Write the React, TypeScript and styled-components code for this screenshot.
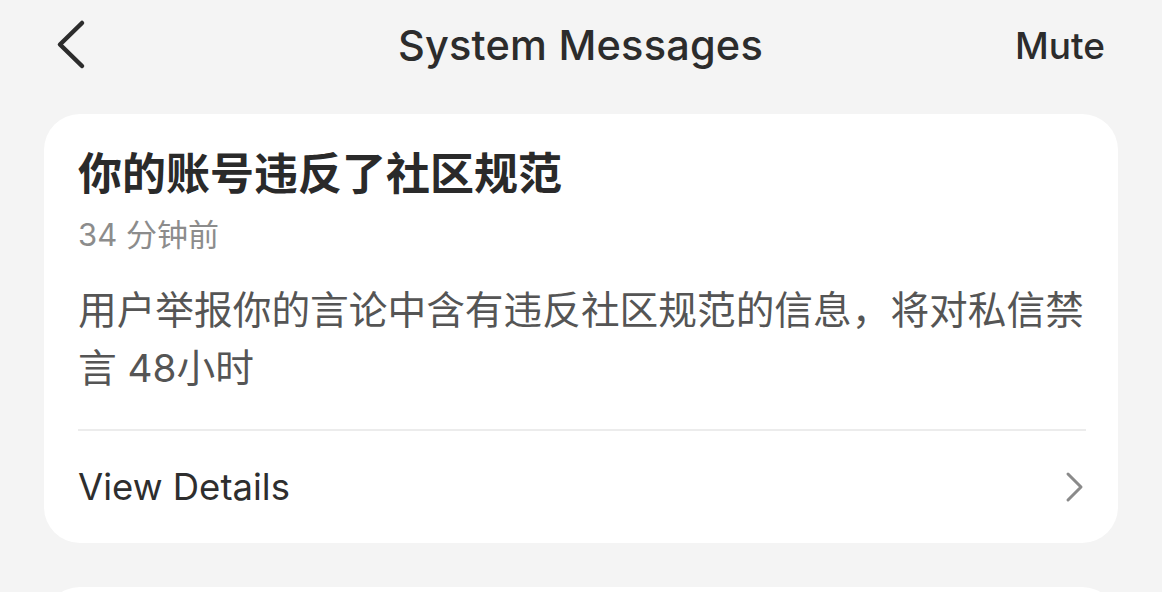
import React from "react";
import styled, { createGlobalStyle } from "styled-components";

const GlobalStyle = createGlobalStyle`
  html, body {
    margin: 0;
    padding: 0;
    background: #f4f4f4;
  }
  body {
    font-family: Inter, "Noto Sans CJK SC", sans-serif;
    -webkit-font-smoothing: antialiased;
  }
`;

const Page = styled.div`
  width: 1162px;
  height: 592px;
  overflow: hidden;
  background: #f4f4f4;
  display: flex;
  flex-direction: column;
`;

const Header = styled.div`
  height: 114px;
  flex-shrink: 0;
  display: grid;
  grid-template-columns: 150px 1fr 150px;
  align-items: start;
  padding: 0 57px 0 56px;
  box-sizing: border-box;
`;

const BackBtn = styled.div`
  height: 90px;
  display: flex;
  align-items: center;
`;

const Title = styled.div`
  height: 90px;
  display: flex;
  align-items: center;
  justify-content: center;
  font-size: 41.5px;
  font-weight: 500;
  color: #2c2c2c;
  letter-spacing: 0.2px;
`;

const Mute = styled.div`
  height: 90px;
  display: flex;
  align-items: center;
  justify-content: flex-end;
  font-size: 37px;
  font-weight: 500;
  color: #2c2c2c;
`;

const List = styled.div`
  display: flex;
  flex-direction: column;
  gap: 44px;
  padding: 0 44px;
`;

const Card = styled.div`
  background: #fff;
  border-radius: 36px;
  padding: 0 32px 0 34px;
  display: flex;
  flex-direction: column;
  flex-shrink: 0;
`;

const Body = styled.div`
  padding-top: 29px;
  padding-bottom: 32px;
  border-bottom: 2px solid #ececec;
`;

const CardTitle = styled.div`
  font-family: "Noto Sans CJK SC", sans-serif;
  font-size: 44px;
  font-weight: 600;
  color: #2a2a2a;
  line-height: 56px;
`;

const Time = styled.div`
  font-size: 31px;
  color: #8c8c8c;
  line-height: 40px;
  margin-top: 16px;
`;

const Text = styled.div`
  font-size: 38.7px;
  color: #555;
  line-height: 58px;
  margin-top: 26px;
`;

const Row = styled.div`
  height: 112px;
  display: flex;
  align-items: center;
  justify-content: space-between;
  font-size: 36.5px;
  color: #2e2e2e;
`;

const NextCard = styled(Card)`
  height: 120px;
`;

const App: React.FC = () => {
  return (
    <>
      <GlobalStyle />
      <Page>
        <Header>
          <BackBtn>
            <svg width="32" height="52" viewBox="0 0 32 52">
              <path
                d="M26 4 L4 25.5 L26 47"
                fill="none"
                stroke="#2c2c2c"
                strokeWidth="4.5"
                strokeLinecap="round"
                strokeLinejoin="round"
              />
            </svg>
          </BackBtn>
          <Title>System Messages</Title>
          <Mute>Mute</Mute>
        </Header>
        <List>
          <Card>
            <Body>
              <CardTitle>你的账号违反了社区规范</CardTitle>
              <Time>34 分钟前</Time>
              <Text>用户举报你的言论中含有违反社区规范的信息，将对私信禁言 48小时</Text>
            </Body>
            <Row>
              <span>View Details</span>
              <svg width="22" height="32" viewBox="0 0 22 32">
                <path
                  d="M4 3 L17 16 L4 29"
                  fill="none"
                  stroke="#8a8a8a"
                  strokeWidth="3"
                  strokeLinecap="round"
                  strokeLinejoin="round"
                />
              </svg>
            </Row>
          </Card>
          <NextCard />
        </List>
      </Page>
    </>
  );
};

export default App;
